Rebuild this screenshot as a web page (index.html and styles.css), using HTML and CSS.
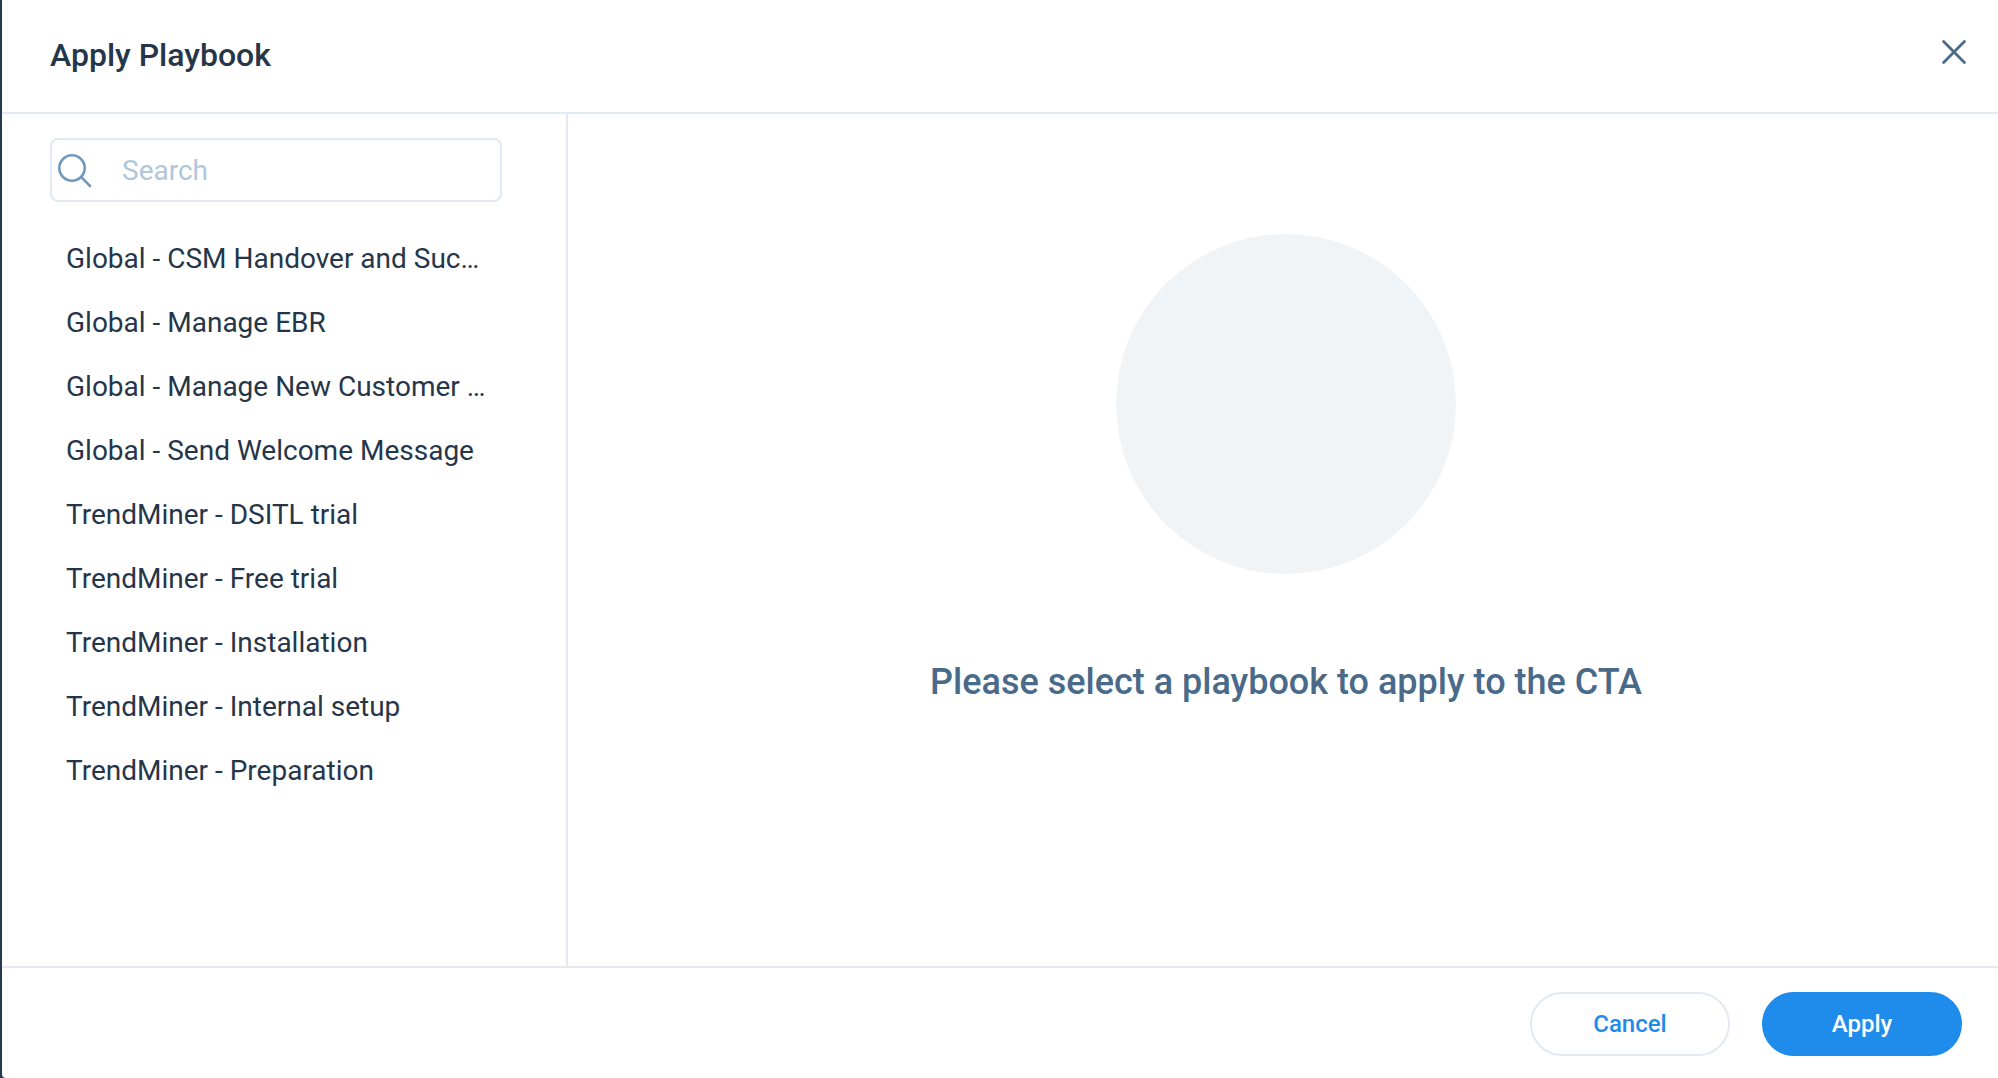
FILE: index.html
```html
<!DOCTYPE html>
<html lang="en">
<head>
    <meta charset="UTF-8">
    <title>Apply Playbook</title>
    <link rel="stylesheet" href="styles.css">
</head>
<body>
    <div class="modal">
        <header class="modal-header">
            <h1 class="modal-title">Apply Playbook</h1>
            <button class="close-btn" type="button" aria-label="Close">
                <svg width="24" height="24" viewBox="0 0 24 24" fill="none" stroke="currentColor" stroke-width="2.8" stroke-linecap="round">
                    <path d="M1.6 1.6 22.4 22.4M22.4 1.6 1.6 22.4"/>
                </svg>
            </button>
        </header>

        <div class="modal-body">
            <aside class="sidebar">
                <label class="search">
                    <svg class="search-icon" width="36" height="36" viewBox="0 0 36 36" fill="none" stroke="currentColor" stroke-width="2.6" stroke-linecap="round">
                        <circle cx="14" cy="16" r="12.7"/>
                        <path d="M23.3 25.2 32 34"/>
                    </svg>
                    <input class="search-input" type="text" placeholder="Search" aria-label="Search">
                </label>
                <ul class="playbooks">
                    <li><a class="playbook" href="#">Global - CSM Handover and Success Plan</a></li>
                    <li><a class="playbook" href="#">Global - Manage EBR</a></li>
                    <li><a class="playbook" href="#">Global - Manage New Customer Onboarding</a></li>
                    <li><a class="playbook" href="#">Global - Send Welcome Message</a></li>
                    <li><a class="playbook" href="#">TrendMiner - DSITL trial</a></li>
                    <li><a class="playbook" href="#">TrendMiner - Free trial</a></li>
                    <li><a class="playbook" href="#">TrendMiner - Installation</a></li>
                    <li><a class="playbook" href="#">TrendMiner - Internal setup</a></li>
                    <li><a class="playbook" href="#">TrendMiner - Preparation</a></li>
                </ul>
            </aside>

            <main class="empty-state">
                <div class="empty-circle"></div>
                <h2 class="empty-text">Please select a playbook to apply to the CTA</h2>
            </main>
        </div>

        <footer class="modal-footer">
            <button class="btn btn-cancel" type="button">Cancel</button>
            <button class="btn btn-apply" type="button">Apply</button>
        </footer>
    </div>
</body>
</html>
```

FILE: styles.css
```css
* {
    box-sizing: border-box;
}
body {
    margin: 0;
    padding-left: 2px;
    background: #26394f;
    color: #26364a;
    font-family: Roboto, sans-serif;
}
.modal {
    display: flex;
    flex-direction: column;
    min-height: 100vh;
    background: #fff;
    border-bottom-left-radius: 4px;
}
.modal-header {
    display: flex;
    align-items: center;
    justify-content: space-between;
    padding: 32px 32px 34px 48px;
    border-bottom: 2px solid #e2e9f2;
}
.modal-title {
    margin: 0;
    font-size: 32px;
    font-weight: 500;
    line-height: 46px;
}
.close-btn {
    display: flex;
    padding: 0 0 6px;
    border: 0;
    background: none;
    color: #4a6a8a;
    cursor: pointer;
}
.modal-body {
    display: flex;
    flex: 1;
}
.sidebar {
    width: 566px;
    padding: 24px 64px 24px 48px;
    border-right: 2px solid #e2e9f2;
}
.search {
    display: flex;
    align-items: center;
    gap: 28px;
    height: 64px;
    padding: 0 6px;
    border: 2px solid #e2e9f2;
    border-radius: 8px;
}
.search-icon {
    flex: none;
    color: #7399ba;
}
.search-input {
    flex: 1;
    min-width: 0;
    padding: 0;
    border: 0;
    outline: 0;
    background: none;
    color: inherit;
    font: inherit;
    font-size: 28px;
}
.search-input::placeholder {
    color: #b0c6d9;
}
.playbooks {
    margin: 25px 0 0;
    padding: 0 16px;
    list-style: none;
}
.playbook {
    display: block;
    overflow: hidden;
    color: inherit;
    font-size: 28px;
    line-height: 64px;
    text-decoration: none;
    text-overflow: ellipsis;
    white-space: nowrap;
}
.empty-state {
    display: flex;
    flex: 1;
    flex-direction: column;
    align-items: center;
    padding: 120px 0 0 6px;
}
.empty-circle {
    width: 340px;
    height: 340px;
    border-radius: 50%;
    background: #f0f4f7;
}
.empty-text {
    margin: 86px 0 0;
    color: #4a6a8a;
    font-size: 36px;
    font-weight: 500;
    line-height: 44px;
}
.modal-footer {
    display: flex;
    justify-content: flex-end;
    gap: 32px;
    padding: 24px 36px 22px;
    border-top: 2px solid #e2e9f2;
}
.btn {
    width: 200px;
    height: 64px;
    border: 2px solid #e2e9f2;
    border-radius: 32px;
    background: #fff;
    color: #1f8ceb;
    font-family: inherit;
    font-size: 24px;
    font-weight: 500;
    cursor: pointer;
}
.btn-apply {
    border-color: #1f8ceb;
    background: #1f8ceb;
    color: #fff;
}
```
